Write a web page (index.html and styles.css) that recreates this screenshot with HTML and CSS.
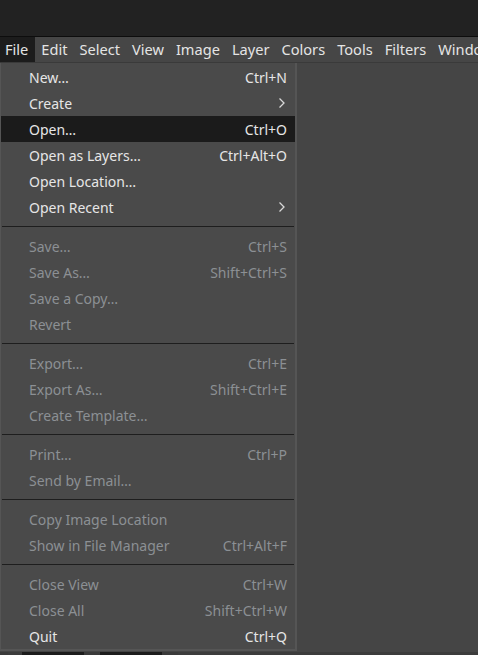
FILE: index.html
```html
<!DOCTYPE html>
<html>
<head>
<meta charset="utf-8">
<link rel="stylesheet" href="styles.css">
</head>
<body>
<div class="titlebar"></div>
<div class="menubar">
  <span class="mb-item active">File</span>
  <span class="mb-item">Edit</span>
  <span class="mb-item">Select</span>
  <span class="mb-item">View</span>
  <span class="mb-item">Image</span>
  <span class="mb-item">Layer</span>
  <span class="mb-item">Colors</span>
  <span class="mb-item">Tools</span>
  <span class="mb-item">Filters</span>
  <span class="mb-item">Windows</span>
</div>
<div class="workspace">
  <div class="canvas-area"></div>
  <div class="dock">
    <div class="dock-edge"></div>
    <div class="combo"></div>
    <div class="arrow"></div>
    <div class="combo"></div>
    <div class="arrow"></div>
  </div>
  <div class="menu">
    <div class="item"><span>New…</span><span class="key">Ctrl+N</span></div>
    <div class="item"><span>Create</span><svg class="chev" width="8" height="12" viewBox="0 0 8 12"><path d="M1.5 1.5 L6 6 L1.5 10.5" fill="none" stroke="#d8d8d8" stroke-width="1.3"/></svg></div>
    <div class="item hl"><span>Open…</span><span class="key">Ctrl+O</span></div>
    <div class="item"><span>Open as Layers…</span><span class="key">Ctrl+Alt+O</span></div>
    <div class="item"><span>Open Location…</span></div>
    <div class="item"><span>Open Recent</span><svg class="chev" width="8" height="12" viewBox="0 0 8 12"><path d="M1.5 1.5 L6 6 L1.5 10.5" fill="none" stroke="#d8d8d8" stroke-width="1.3"/></svg></div>
    <div class="sep"></div>
    <div class="item dis"><span>Save…</span><span class="key">Ctrl+S</span></div>
    <div class="item dis"><span>Save As…</span><span class="key">Shift+Ctrl+S</span></div>
    <div class="item dis"><span>Save a Copy…</span></div>
    <div class="item dis"><span>Revert</span></div>
    <div class="sep"></div>
    <div class="item dis"><span>Export…</span><span class="key">Ctrl+E</span></div>
    <div class="item dis"><span>Export As…</span><span class="key">Shift+Ctrl+E</span></div>
    <div class="item dis"><span>Create Template…</span></div>
    <div class="sep"></div>
    <div class="item dis"><span>Print…</span><span class="key">Ctrl+P</span></div>
    <div class="item dis"><span>Send by Email…</span></div>
    <div class="sep"></div>
    <div class="item dis"><span>Copy Image Location</span></div>
    <div class="item dis"><span>Show in File Manager</span><span class="key">Ctrl+Alt+F</span></div>
    <div class="sep"></div>
    <div class="item dis"><span>Close View</span><span class="key">Ctrl+W</span></div>
    <div class="item dis"><span>Close All</span><span class="key">Shift+Ctrl+W</span></div>
    <div class="item"><span>Quit</span><span class="key">Ctrl+Q</span></div>
  </div>
</div>
</body>
</html>
```

FILE: styles.css
```css
html, body {
  margin: 0;
  padding: 0;
  height: 100%;
  overflow: hidden;
}
body {
  background: #454545;
  font-family: "Noto Sans", "DejaVu Sans", sans-serif;
  font-size: 14px;
  color: #e6e6e6;
}
.titlebar {
  height: 36px;
  background: #222222;
  border-bottom: 1px solid #0d0d0d;
}
.menubar {
  height: 25px;
  display: flex;
  background: #464646;
  border-bottom: 1px solid #3a3a3a;
  white-space: nowrap;
  overflow: hidden;
}
.mb-item {
  padding: 0 6px;
  line-height: 25px;
  font-size: 14.6px;
  color: #e4e4e4;
}
.mb-item.active {
  padding: 0 7px 0 5px;
  background: #1c1c1c;
}
.workspace {
  position: relative;
  height: 600px;
}
.canvas-area {
  height: 589px;
}
.dock {
  display: flex;
  height: 20px;
  background: #3c3c3c;
}
.dock-edge {
  width: 8px;
  margin-right: 14px;
  background: #3a3a3a;
}
.combo {
  width: 62px;
  background: #1c1c1c;
}
.arrow {
  width: 16px;
  background: #3a3a3a;
}
.menu {
  position: absolute;
  top: 0;
  left: 0;
  width: 294px;
  padding: 1px 0 0 0;
  background: #4a4a4a;
  border-left: 1px solid #555;
  border-right: 2px solid #555;
  border-bottom: 2px solid #555;
}
.item {
  height: 26px;
  display: flex;
  align-items: center;
  justify-content: space-between;
  padding: 0 8px 0 28px;
}
.item.hl {
  background: #1b1b1b;
}
.item.dis {
  color: #8c9094;
}
.key {
  text-align: right;
}
.chev {
  margin-right: 1px;
}
.sep {
  height: 1px;
  background: #1e1e1e;
  margin: 6px 1px;
}
```
